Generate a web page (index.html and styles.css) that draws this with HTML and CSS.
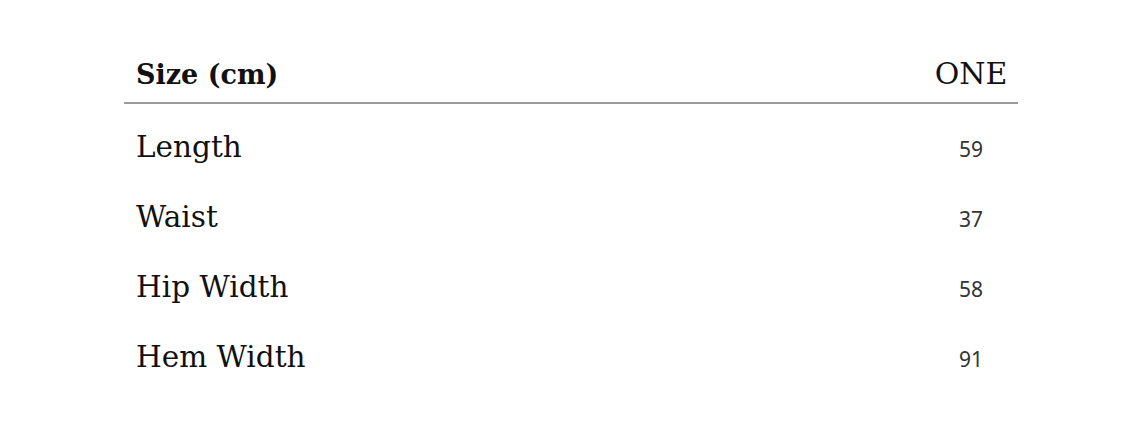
FILE: index.html
```html
<!DOCTYPE html>
<html lang="en">
<head>
<meta charset="utf-8">
<title>Size chart</title>
<link rel="stylesheet" href="styles.css">
</head>
<body>
<div class="sheet">
  <div class="row head">
    <div class="label">Size (cm)</div>
    <div class="value">ONE</div>
  </div>
  <div class="rows">
    <div class="row item"><div class="label">Length</div><div class="value">59</div></div>
    <div class="row item"><div class="label">Waist</div><div class="value">37</div></div>
    <div class="row item"><div class="label">Hip Width</div><div class="value">58</div></div>
    <div class="row item"><div class="label">Hem Width</div><div class="value">91</div></div>
  </div>
</div>
</body>
</html>
```
FILE: styles.css
```css
html, body {
  margin: 0;
  padding: 0;
  background: #ffffff;
}
.sheet {
  width: 894px;
  margin-left: 124px;
  padding-top: 54px;
  font-family: "DejaVu Serif", "Liberation Serif", serif;
  color: #111111;
}
.row {
  display: grid;
  grid-template-columns: 1fr 94px;
  align-items: baseline;
}
.label {
  padding-left: 12px;
}
.value {
  text-align: center;
}
.head {
  line-height: 40px;
  padding-bottom: 7px;
  border-bottom: 2px solid #9a9a9a;
}
.head .label {
  font-weight: bold;
  font-size: 27px;
}
.head .value {
  font-size: 30px;
}
.rows {
  padding-top: 8px;
}
.item {
  height: 70px;
  line-height: 70px;
}
.item .label {
  font-size: 29.5px;
}
.item .value {
  font-family: "Noto Sans", "Open Sans", sans-serif;
  font-size: 21px;
  color: #333333;
}
```
